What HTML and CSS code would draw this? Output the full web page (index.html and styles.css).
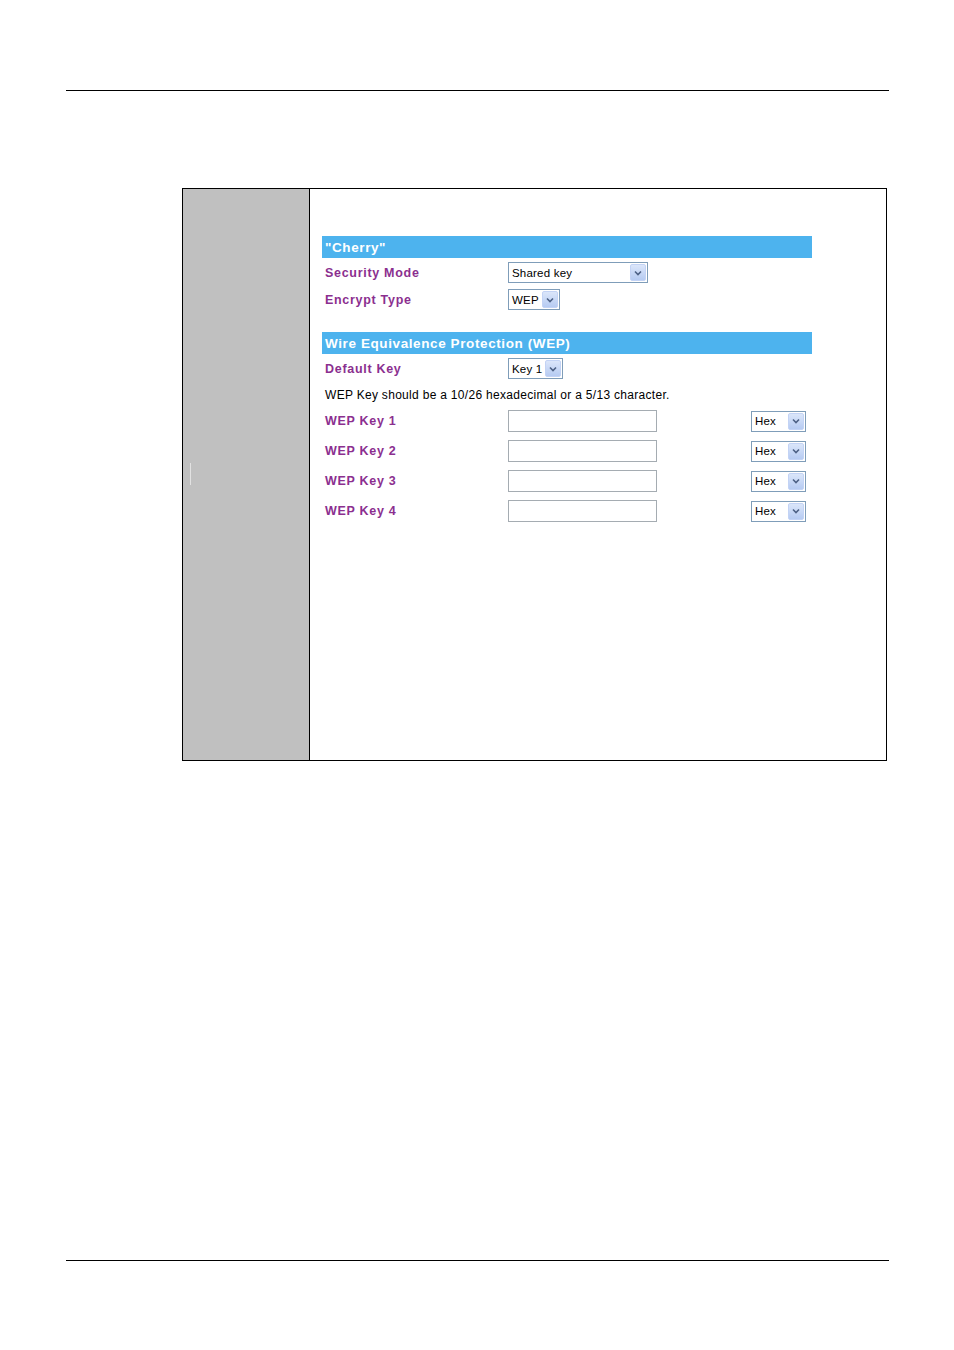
FILE: index.html
```html
<!DOCTYPE html>
<html lang="en">
<head>
  <meta charset="UTF-8" />
  <title>Wireless Security</title>
  <link rel="stylesheet" href="styles.css">
</head>
<body>
  <div class="page">
    <div class="rule top"></div>

    <div class="shot">
      <div class="side">
        <span class="side-mark"></span>
      </div>
      <div class="main">
        <div class="bar">"Cherry"</div>
        <div class="row first">
          <span class="label">Security Mode</span>
          <span class="select w-mode">
            <span class="value">Shared key</span>
            <span class="arrow"><svg viewBox="0 0 8 6" width="8" height="6"><path d="M1 1.5 L4 4.5 L7 1.5" fill="none" stroke="#4d6185" stroke-width="1.6"/></svg></span>
          </span>
        </div>
        <div class="row">
          <span class="label">Encrypt Type</span>
          <span class="select w-type">
            <span class="value">WEP</span>
            <span class="arrow"><svg viewBox="0 0 8 6" width="8" height="6"><path d="M1 1.5 L4 4.5 L7 1.5" fill="none" stroke="#4d6185" stroke-width="1.6"/></svg></span>
          </span>
        </div>

        <div class="bar second">Wire Equivalence Protection (WEP)</div>
        <div class="row first">
          <span class="label">Default Key</span>
          <span class="select w-key">
            <span class="value">Key 1</span>
            <span class="arrow"><svg viewBox="0 0 8 6" width="8" height="6"><path d="M1 1.5 L4 4.5 L7 1.5" fill="none" stroke="#4d6185" stroke-width="1.6"/></svg></span>
          </span>
        </div>
        <div class="note">WEP Key should be a 10/26 hexadecimal or a 5/13 character.</div>

        <div class="key-row">
          <span class="label">WEP Key 1</span>
          <span class="input"></span>
          <span class="select w-hex">
            <span class="value">Hex</span>
            <span class="arrow"><svg viewBox="0 0 8 6" width="8" height="6"><path d="M1 1.5 L4 4.5 L7 1.5" fill="none" stroke="#4d6185" stroke-width="1.6"/></svg></span>
          </span>
        </div>
        <div class="key-row">
          <span class="label">WEP Key 2</span>
          <span class="input"></span>
          <span class="select w-hex">
            <span class="value">Hex</span>
            <span class="arrow"><svg viewBox="0 0 8 6" width="8" height="6"><path d="M1 1.5 L4 4.5 L7 1.5" fill="none" stroke="#4d6185" stroke-width="1.6"/></svg></span>
          </span>
        </div>
        <div class="key-row">
          <span class="label">WEP Key 3</span>
          <span class="input"></span>
          <span class="select w-hex">
            <span class="value">Hex</span>
            <span class="arrow"><svg viewBox="0 0 8 6" width="8" height="6"><path d="M1 1.5 L4 4.5 L7 1.5" fill="none" stroke="#4d6185" stroke-width="1.6"/></svg></span>
          </span>
        </div>
        <div class="key-row">
          <span class="label">WEP Key 4</span>
          <span class="input"></span>
          <span class="select w-hex">
            <span class="value">Hex</span>
            <span class="arrow"><svg viewBox="0 0 8 6" width="8" height="6"><path d="M1 1.5 L4 4.5 L7 1.5" fill="none" stroke="#4d6185" stroke-width="1.6"/></svg></span>
          </span>
        </div>
      </div>
    </div>

    <div class="rule bottom"></div>
  </div>
</body>
</html>
```

FILE: styles.css
```css
* {
  box-sizing: border-box;
  margin: 0;
  padding: 0;
}

body {
  background: #ffffff;
  font-family: 'Liberation Sans', Arial, sans-serif;
}

.page {
  width: 954px;
  height: 1350px;
  padding-top: 90px;
}

.rule {
  margin-left: 66px;
  width: 823px;
  border-top: 1px solid #000000;
}

.rule.bottom {
  margin-top: 499px;
}

.shot {
  display: flex;
  margin-top: 97px;
  margin-left: 182px;
  width: 705px;
  height: 573px;
  border: 1px solid #000000;
}

.side {
  width: 127px;
  background: #c0c0c0;
  border-right: 1px solid #000000;
  padding: 274px 0 0 7px;
}

.side-mark {
  display: block;
  width: 1px;
  height: 22px;
  background: #e2e2e2;
}

.main {
  flex: 1;
  padding: 47px 0 0 12px;
}

.bar {
  width: 490px;
  height: 22px;
  background: #4db3ee;
  color: #ffffff;
  font-weight: bold;
  font-size: 13.5px;
  letter-spacing: 0.6px;
  line-height: 23px;
  padding-left: 3px;
}

.bar.second {
  margin-top: 22px;
}

.row {
  display: flex;
  align-items: center;
  height: 21px;
  margin-top: 6px;
}

.row.first {
  margin-top: 4px;
}

.label {
  width: 186px;
  padding-left: 3px;
  color: #8b2f8f;
  font-weight: bold;
  font-size: 12.5px;
  letter-spacing: 0.7px;
}

.select {
  display: flex;
  align-items: center;
  height: 21px;
  border: 1px solid #7f9db9;
  background: #ffffff;
  padding: 1px;
}

.select .value {
  flex: 1;
  font-size: 11.5px;
  letter-spacing: 0.2px;
  color: #000000;
  padding-left: 2px;
}

.arrow {
  display: flex;
  align-items: center;
  justify-content: center;
  width: 16px;
  height: 17px;
  border-radius: 2px;
  background: linear-gradient(#dbe6fa, #b6cbf2);
  border: 1px solid #c3d3f5;
}

.w-mode { width: 140px; }
.w-type { width: 52px; }
.w-key { width: 55px; }
.w-hex { width: 55px; }

.note {
  margin-top: 9px;
  padding-left: 3px;
  font-size: 12px;
  letter-spacing: 0.3px;
  color: #000000;
  height: 17px;
}

.key-row {
  display: flex;
  align-items: center;
  height: 22px;
  margin-top: 5px;
}

.key-row + .key-row {
  margin-top: 8px;
}

.input {
  width: 149px;
  height: 22px;
  border: 1px solid #a5acb2;
  background: #ffffff;
  margin-right: 94px;
}
```
